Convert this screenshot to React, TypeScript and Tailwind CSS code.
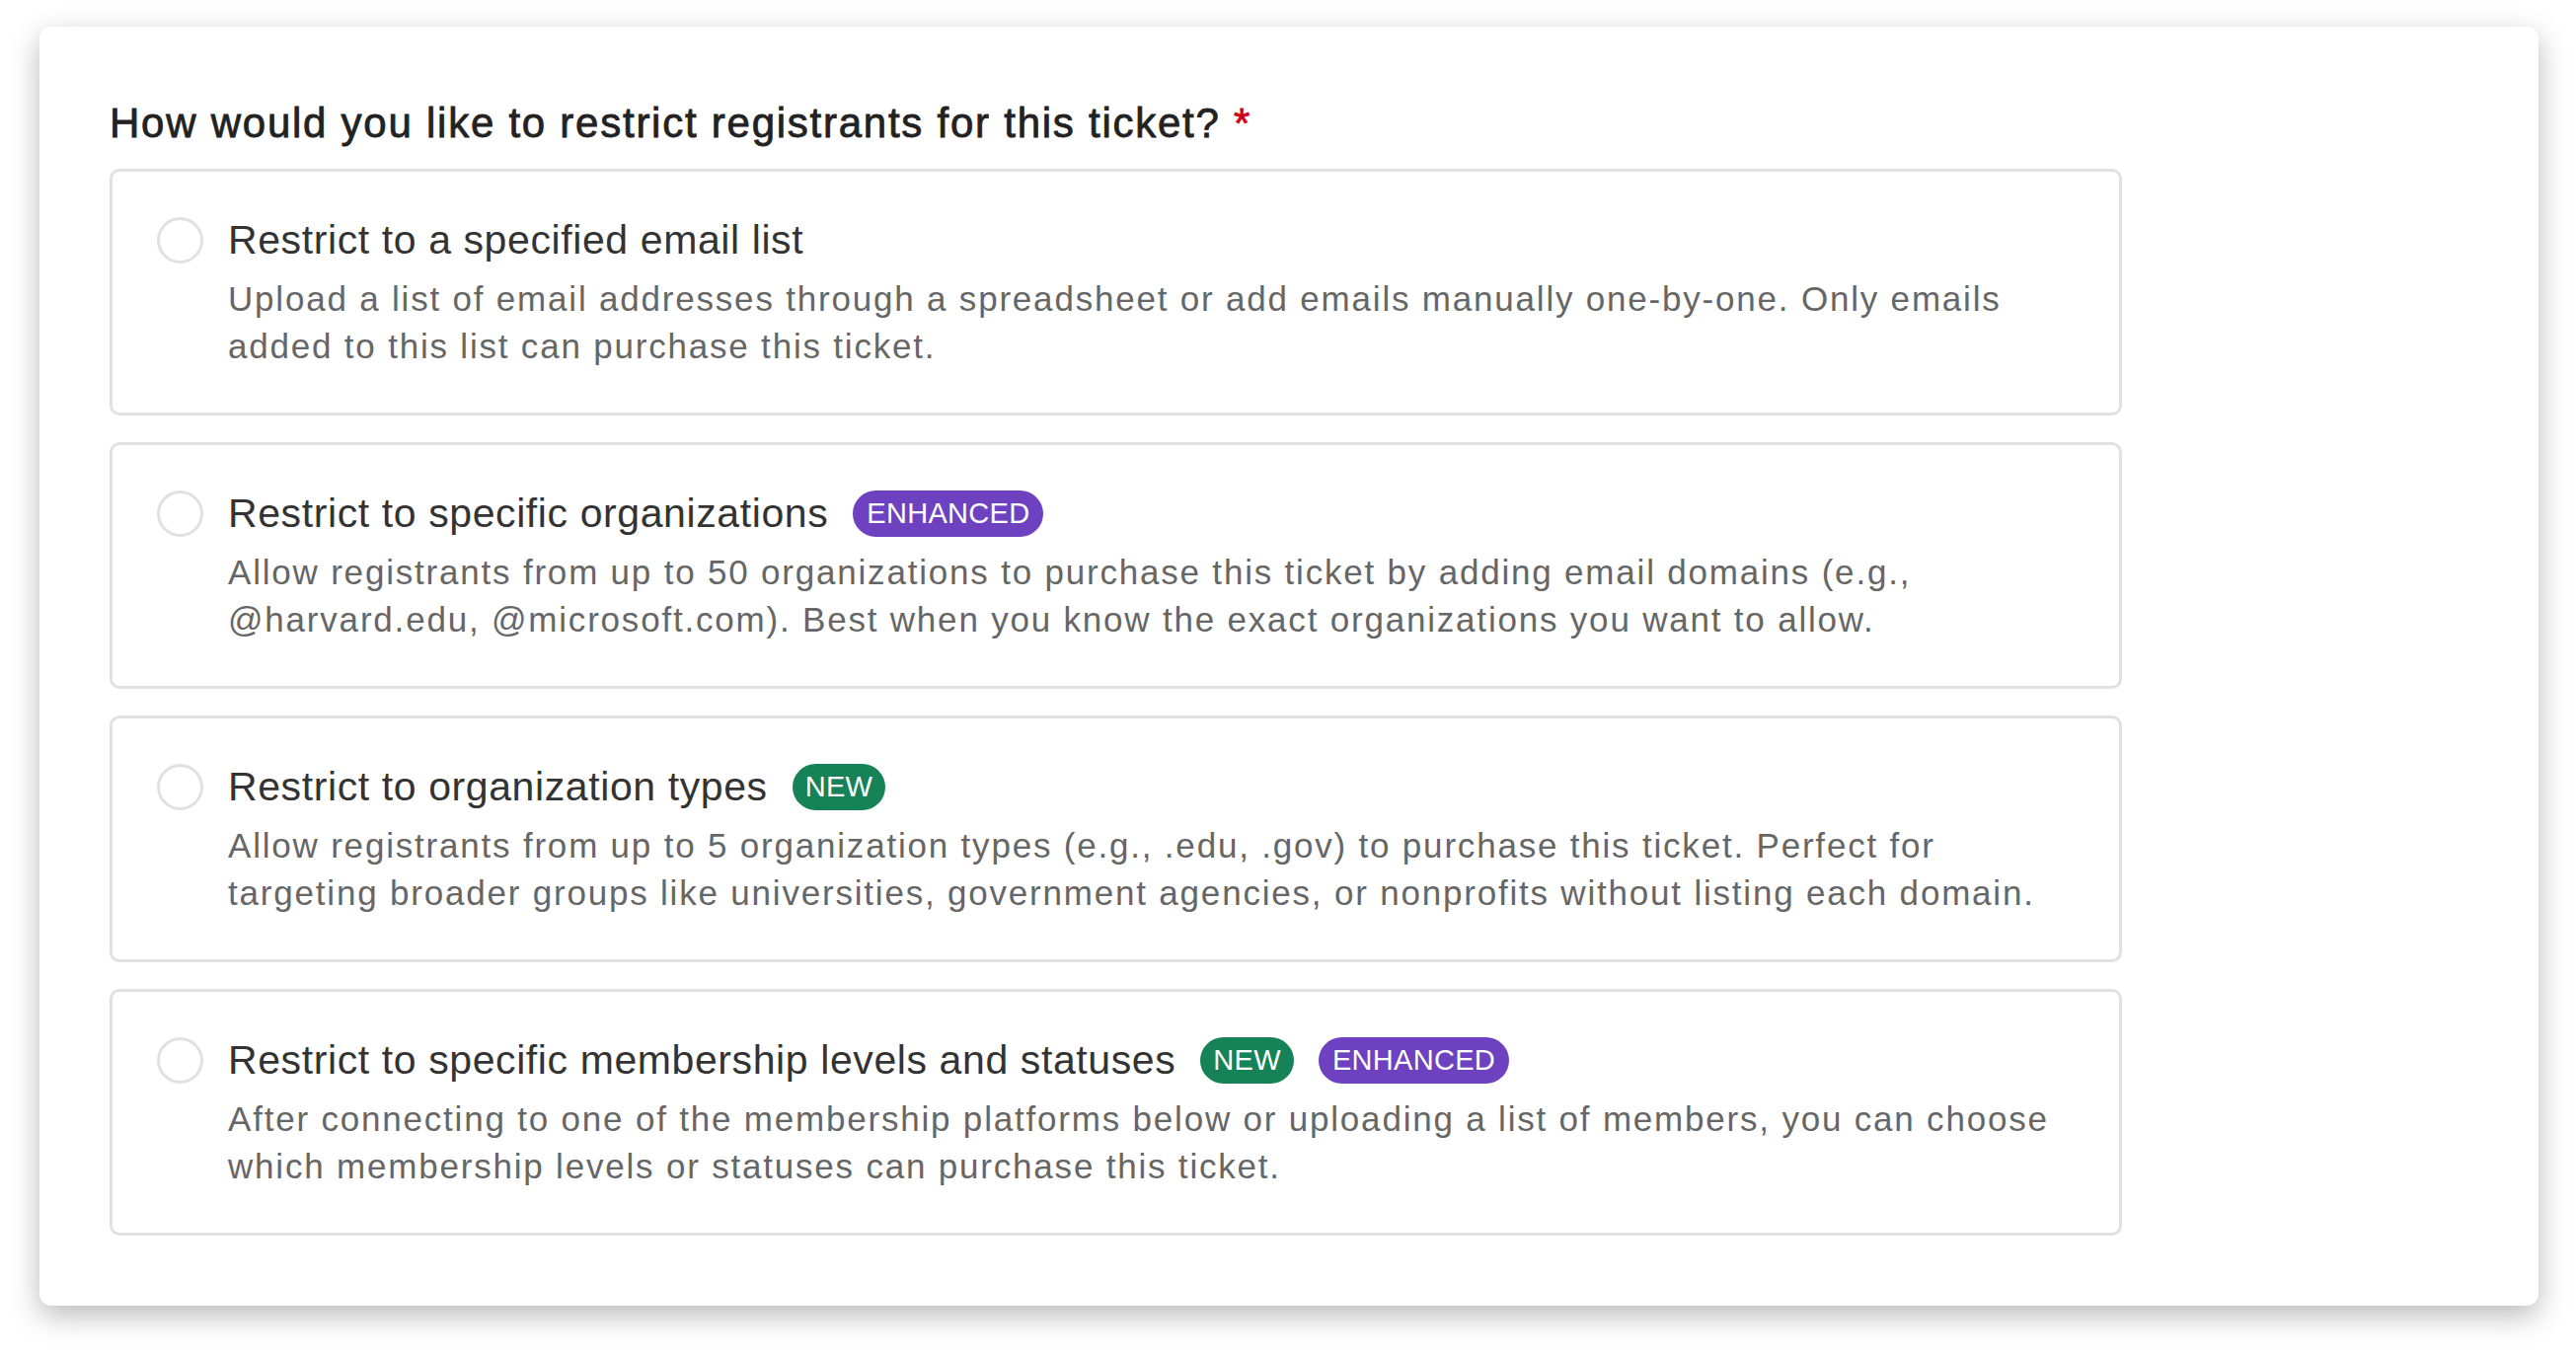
import React, { useState } from 'react';

type Badge = 'new' | 'enhanced';

interface RestrictionOption {
  id: string;
  title: string;
  description: string;
  badges: Badge[];
}

const OPTIONS: RestrictionOption[] = [
  {
    id: 'email-list',
    title: 'Restrict to a specified email list',
    description:
      'Upload a list of email addresses through a spreadsheet or add emails manually one-by-one. Only emails added to this list can purchase this ticket.',
    badges: [],
  },
  {
    id: 'organizations',
    title: 'Restrict to specific organizations',
    description:
      'Allow registrants from up to 50 organizations to purchase this ticket by adding email domains (e.g., @harvard.edu, @microsoft.com). Best when you know the exact organizations you want to allow.',
    badges: ['enhanced'],
  },
  {
    id: 'org-types',
    title: 'Restrict to organization types',
    description:
      'Allow registrants from up to 5 organization types (e.g., .edu, .gov) to purchase this ticket. Perfect for targeting broader groups like universities, government agencies, or nonprofits without listing each domain.',
    badges: ['new'],
  },
  {
    id: 'membership',
    title: 'Restrict to specific membership levels and statuses',
    description:
      'After connecting to one of the membership platforms below or uploading a list of members, you can choose which membership levels or statuses can purchase this ticket.',
    badges: ['new', 'enhanced'],
  },
];

function Pill({ kind }: { kind: Badge }) {
  if (kind === 'new') {
    return (
      <span className="inline-flex h-[47px] items-center rounded-full bg-[#168257] px-[13px] text-[29px] leading-none tracking-[0.3px] text-white">
        NEW
      </span>
    );
  }
  return (
    <span className="inline-flex h-[47px] items-center rounded-full bg-[#6d41c0] px-[14px] text-[29px] leading-none tracking-[0.3px] text-white">
      ENHANCED
    </span>
  );
}

function OptionCard({
  option,
  checked,
  onSelect,
}: {
  option: RestrictionOption;
  checked: boolean;
  onSelect: () => void;
}) {
  return (
    <label
      className="flex cursor-pointer gap-[25px] rounded-[10px] border-[3px] border-[#e1e1e1] bg-white pt-[45px] pb-[43px] pl-[45px] pr-[44px]"
      onClick={onSelect}
    >
      <span className="flex h-[48px] shrink-0 items-center">
        <span
          className={`flex h-[47px] w-[47px] items-center justify-center rounded-full border-[3px] ${
            checked ? 'border-[#6d41c0]' : 'border-[#e1e1e1]'
          }`}
        >
          {checked && <span className="h-[23px] w-[23px] rounded-full bg-[#6d41c0]" />}
        </span>
      </span>
      <div className="flex-1">
        <div className="flex h-[48px] items-center gap-[25px]">
          <span className="text-[41px] leading-[48px] tracking-[0.6px] text-[#333]">{option.title}</span>
          {option.badges.map((b) => (
            <Pill key={b} kind={b} />
          ))}
        </div>
        <p className="mt-[12px] text-[35px] leading-[48px] tracking-[1.8px] text-[#666]">
          {option.description}
        </p>
      </div>
    </label>
  );
}

export default function App() {
  const [selected, setSelected] = useState<string | null>(null);

  return (
    <div
      className="min-h-screen bg-white pt-[27px] pl-[40px] pr-[38px] pb-[51px]"
      style={{ fontFamily: '"Liberation Sans", Arial, Helvetica, sans-serif' }}
    >
      <div className="h-[1296px] rounded-[12px] bg-white px-[71px] pt-[75px] shadow-[0_10px_30px_rgba(0,0,0,0.28)]">
        <h2 className="text-[42px] leading-[46px] font-normal tracking-[1.75px] text-[#222] [-webkit-text-stroke:0.8px_#222]">
          How would you like to restrict registrants for this ticket?{' '}
          <span className="text-[#d0021b] [-webkit-text-stroke:0.8px_#d0021b]">*</span>
        </h2>
        <div className="mt-[23px] flex w-[2039px] flex-col gap-[27px]">
          {OPTIONS.map((opt) => (
            <OptionCard
              key={opt.id}
              option={opt}
              checked={selected === opt.id}
              onSelect={() => setSelected(opt.id)}
            />
          ))}
        </div>
      </div>
    </div>
  );
}
